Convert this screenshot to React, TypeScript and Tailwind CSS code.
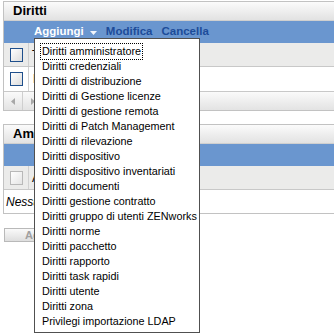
import React from 'react';

const items = [
  'Diritti amministratore',
  'Diritti credenziali',
  'Diritti di distribuzione',
  'Diritti di Gestione licenze',
  'Diritti di gestione remota',
  'Diritti di Patch Management',
  'Diritti di rilevazione',
  'Diritti dispositivo',
  'Diritti dispositivo inventariati',
  'Diritti documenti',
  'Diritti gestione contratto',
  'Diritti gruppo di utenti ZENworks',
  'Diritti norme',
  'Diritti pacchetto',
  'Diritti rapporto',
  'Diritti task rapidi',
  'Diritti utente',
  'Diritti zona',
  'Privilegi importazione LDAP',
];

function Checkbox({ disabled }: { disabled?: boolean }) {
  return (
    <div
      className={
        disabled
          ? 'w-[13px] h-[14px] border border-[#b8b8b8] bg-gradient-to-br from-white to-[#e4e4e4]'
          : 'w-[13px] h-[14px] border border-[#1f4f8c] bg-gradient-to-br from-white to-[#dcdcdc]'
      }
    />
  );
}

function Header({ title }: { title: string }) {
  return (
    <div className="h-[19px] flex items-center pl-[9px] bg-gradient-to-b from-[#fbfbfb] to-[#e2e2e2] border-b border-[#cfcfcf] text-[13px] font-bold text-black whitespace-nowrap">
      {title}
    </div>
  );
}

export default function App() {
  return (
    <div
      className="relative w-[334px] h-[336px] overflow-hidden bg-white text-black"
      style={{ fontFamily: '"Liberation Sans", Arial, sans-serif' }}
    >
      <div className="pt-[1px] pl-[3px]">
        {/* Diritti panel */}
        <div className="w-[340px] border border-[#c2c2c2]">
          <Header title="Diritti" />
          <div className="h-[22px] bg-[#6a96cf] flex items-center text-[11.5px] font-bold whitespace-nowrap">
            <div className="w-[30px] shrink-0" />
            <span className="text-white">Aggiungi</span>
            <svg width="7" height="4" viewBox="0 0 7 4" className="ml-[6px] mt-[1px] shrink-0">
              <path d="M0 0h7L3.5 4z" fill="#f2f5fb" />
            </svg>
            <span className="ml-[9px] text-[#1d4c99]">Modifica</span>
            <span className="ml-[9px] text-[#1d4c99]">Cancella</span>
          </div>
          <div className="h-[24px] bg-[#ebebea] border-b border-[#c8c8c8] flex">
            <div className="w-[25px] border-r border-[#d0d0d0] flex items-center justify-center">
              <Checkbox />
            </div>
            <div className="pl-[3px] flex items-center text-[12px]">T</div>
          </div>
          <div className="h-[25px] bg-white border-b border-[#c8c8c8] flex">
            <div className="w-[25px] border-r border-[#d0d0d0] flex items-center justify-center">
              <Checkbox />
            </div>
            <div className="pl-[4px] flex items-center text-[12px]">D</div>
          </div>
          <div className="h-[18px] bg-gradient-to-b from-[#fafafa] to-[#e3e3e3] flex">
            <div className="w-[19px] border-r border-[#cfcfcf] flex items-center justify-center">
              <svg width="4" height="7" viewBox="0 0 4 7">
                <path d="M4 0v7L0 3.5z" fill="#a8a8a8" />
              </svg>
            </div>
            <div className="w-[19px] flex items-center justify-center">
              <svg width="4" height="7" viewBox="0 0 4 7">
                <path d="M0 0v7L4 3.5z" fill="#a8a8a8" />
              </svg>
            </div>
          </div>
        </div>

        {/* Amministratori panel */}
        <div className="w-[340px] mt-[13px] border border-[#c2c2c2]">
          <Header title="Amm" />
          <div className="h-[22px] bg-[#6a96cf]" />
          <div className="h-[24px] bg-[#ebebea] border-b border-[#c8c8c8] flex">
            <div className="w-[25px] border-r border-[#d0d0d0] flex items-center justify-center">
              <Checkbox disabled />
            </div>
            <div className="pl-[3px] flex items-center text-[12px]">A</div>
          </div>
          <div className="h-[23px] bg-white flex items-center pl-[2px] text-[12px] italic whitespace-nowrap">
            Nessu
          </div>
        </div>

        <div className="mt-[14px] ml-[1px] w-[92px] h-[14px] border border-[#b9b9b9] bg-gradient-to-b from-[#fafafa] to-[#dedede] flex items-center pl-[20px] text-[11px] font-bold text-[#a0a0a0] whitespace-nowrap">
          Ag
        </div>
      </div>

      {/* Dropdown menu */}
      <div className="absolute left-[34px] top-[38px] w-[166px] bg-white border border-[#505050] pt-[5px] pb-[3px] text-[10.8px]">
        {items.map((label, i) => (
          <div key={label} className="h-[15px] flex items-center pl-[7px] whitespace-nowrap">
            <span
              className={
                i === 0
                  ? 'leading-[15px] px-[1px] outline outline-1 outline-dotted outline-black -ml-[1px]'
                  : 'leading-[15px]'
              }
            >
              {label}
            </span>
          </div>
        ))}
      </div>
    </div>
  );
}
